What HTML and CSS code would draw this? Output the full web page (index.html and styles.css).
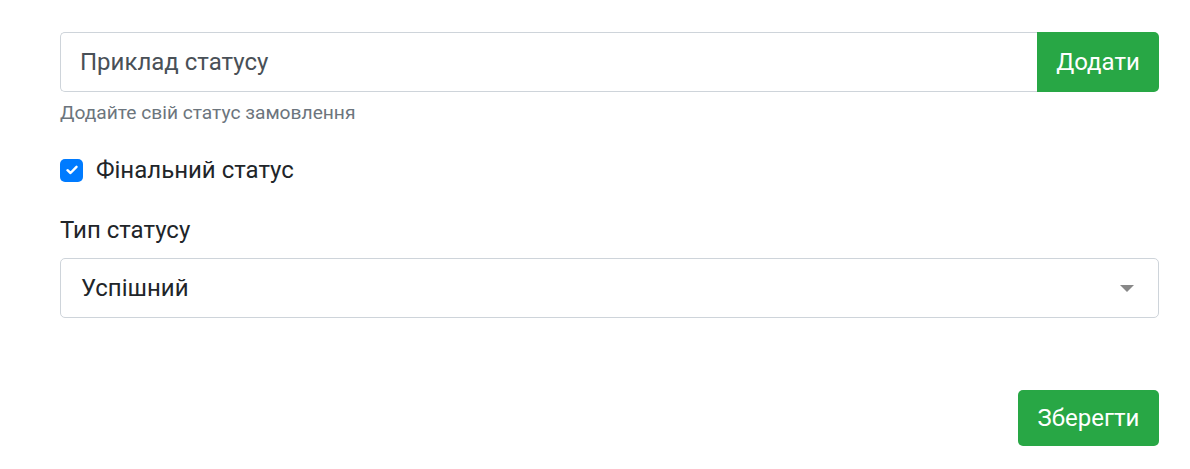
FILE: index.html
```html
<!DOCTYPE html>
<html lang="uk">
<head>
    <meta charset="UTF-8">
    <meta name="viewport" content="width=device-width, initial-scale=1.0">
    <title>Статус замовлення</title>
    <link rel="stylesheet" href="styles.css">
</head>
<body>
    <div class="container">
        <div class="input-group">
            <input type="text" class="form-control" value="Приклад статусу">
            <button class="btn btn-add">Додати</button>
        </div>
        <small class="help">Додайте свій статус замовлення</small>

        <label class="check">
            <span class="check-box">
                <svg width="12" height="10" viewBox="0 0 12 10"><path d="M1.5 5.2 L4.5 8 L10.5 1.8" fill="none" stroke="#fff" stroke-width="2.4" stroke-linecap="round" stroke-linejoin="round"/></svg>
            </span>
            Фінальний статус
        </label>

        <label class="field-label" for="type">Тип статусу</label>
        <div class="select">
            <span>Успішний</span>
            <span class="caret"></span>
        </div>

        <div class="actions">
            <button class="btn btn-save">Зберегти</button>
        </div>
    </div>
</body>
</html>
```

FILE: styles.css
```css
body {
    margin: 0;
    font-family: Roboto, "Noto Sans", Arial, sans-serif;
    color: #212529;
    background-color: #fff;
}
.container {
    width: 1099px;
    padding: 32px 0 0 60px;
}
.input-group {
    display: flex;
    height: 60px;
}
.form-control {
    flex: 1;
    min-width: 0;
    box-sizing: border-box;
    height: 60px;
    margin: 0;
    padding: 0 19px;
    font-family: inherit;
    font-size: 24px;
    color: #495057;
    border: 1px solid #ced4da;
    border-right: none;
    border-radius: 5px 0 0 5px;
    outline: none;
}
.btn {
    font-family: inherit;
    font-size: 24px;
    color: #fff;
    background-color: #28a745;
    border: none;
    cursor: pointer;
}
.btn-add {
    width: 122px;
    height: 60px;
    border-radius: 0 5px 5px 0;
}
.help {
    display: block;
    margin-top: 8px;
    font-size: 19.2px;
    line-height: 26px;
    color: #6c757d;
}
.check {
    display: flex;
    align-items: center;
    gap: 13px;
    margin-top: 28px;
    font-size: 24px;
    line-height: 32px;
}
.check-box {
    width: 23px;
    height: 23px;
    border-radius: 5px;
    background-color: #007bff;
    display: flex;
    align-items: center;
    justify-content: center;
}
.field-label {
    display: block;
    margin-top: 28px;
    font-size: 24px;
    line-height: 32px;
}
.select {
    box-sizing: border-box;
    height: 60px;
    margin-top: 12px;
    padding: 0 24px 0 20px;
    display: flex;
    align-items: center;
    justify-content: space-between;
    font-size: 24px;
    color: #212529;
    border: 1px solid #ced4da;
    border-radius: 5px;
}
.caret {
    width: 0;
    height: 0;
    border-left: 7px solid transparent;
    border-right: 7px solid transparent;
    border-top: 7px solid #888;
}
.actions {
    display: flex;
    justify-content: flex-end;
    margin-top: 72px;
}
.btn-save {
    width: 141px;
    height: 56px;
    border-radius: 5px;
}
```
